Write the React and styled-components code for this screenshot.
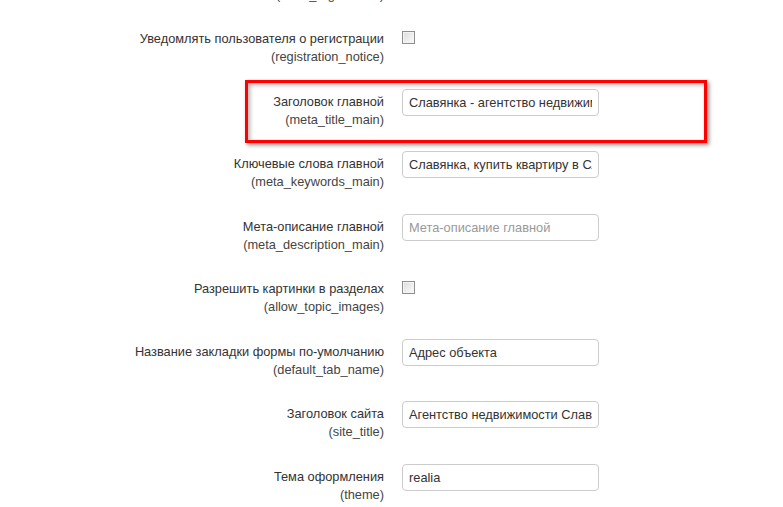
import styled, { createGlobalStyle } from "styled-components";

const GlobalStyle = createGlobalStyle`
  body {
    margin: 0;
    background: #fff;
    font-family: "Liberation Sans", Arial, sans-serif;
    font-size: 13px;
    color: #333;
  }
`;

const Page = styled.div`
  width: 783px;
  height: 507px;
  overflow: hidden;
`;

const Form = styled.form`
  display: flex;
  flex-direction: column;
  margin-top: -36.5px;
`;

const Row = styled.div`
  position: relative;
  display: flex;
  align-items: flex-start;
  gap: 18px;
  height: 62.5px;
`;

const Label = styled.label`
  width: 384px;
  flex: none;
  padding-top: 4px;
  text-align: right;
  font-size: 12.8px;
  line-height: 18px;
  color: #333;
`;

const Key = styled.span`
  display: block;
  color: #444;
`;

const Input = styled.input`
  box-sizing: border-box;
  width: 197px;
  height: 27px;
  padding: 0 6px;
  border: 1px solid #ccc;
  border-radius: 4px;
  font-family: "Liberation Sans", Arial, sans-serif;
  font-size: 12.8px;
  color: #333;
  background: #fff;
  outline: none;

  &::placeholder {
    color: #999;
  }
`;

const Check = styled.span`
  box-sizing: border-box;
  display: block;
  width: 13px;
  height: 13px;
  margin-top: 5px;
  border: 1px solid #8f8f8f;
  background: linear-gradient(135deg, #dcdcdc, #fbfbfb);
  box-shadow: inset 0 0 0 1px #f4f4f4;
`;

const Highlight = styled.div`
  position: absolute;
  box-sizing: border-box;
  left: 245px;
  top: -8.5px;
  width: 462px;
  height: 63px;
  border: 3px solid #ff0000;
  box-shadow: 2px 2px 4px rgba(0, 0, 0, 0.45),
    inset 2px 2px 4px rgba(0, 0, 0, 0.3);
  pointer-events: none;
`;

const fields = [
  { label: "Регистрация пользователей", key: "allow_registration", type: "check" },
  { label: "Уведомлять пользователя о регистрации", key: "registration_notice", type: "check" },
  { label: "Заголовок главной", key: "meta_title_main", value: "Славянка - агентство недвижимости", marked: true },
  { label: "Ключевые слова главной", key: "meta_keywords_main", value: "Славянка, купить квартиру в Славянке" },
  { label: "Мета-описание главной", key: "meta_description_main", placeholder: "Мета-описание главной" },
  { label: "Разрешить картинки в разделах", key: "allow_topic_images", type: "check" },
  { label: "Название закладки формы по-умолчанию", key: "default_tab_name", value: "Адрес объекта" },
  { label: "Заголовок сайта", key: "site_title", value: "Агентство недвижимости Славянка" },
  { label: "Тема оформления", key: "theme", value: "realia" },
];

const App = () => {
  return (
    <Page>
      <GlobalStyle />
      <Form>
        {fields.map((f) => (
          <Row key={f.key}>
            <Label>
              {f.label}
              <Key>({f.key})</Key>
            </Label>
            {f.type === "check" ? (
              <Check />
            ) : (
              <Input
                defaultValue={f.value}
                placeholder={f.placeholder}
                readOnly
              />
            )}
            {f.marked && <Highlight />}
          </Row>
        ))}
      </Form>
    </Page>
  );
};

export default App;
